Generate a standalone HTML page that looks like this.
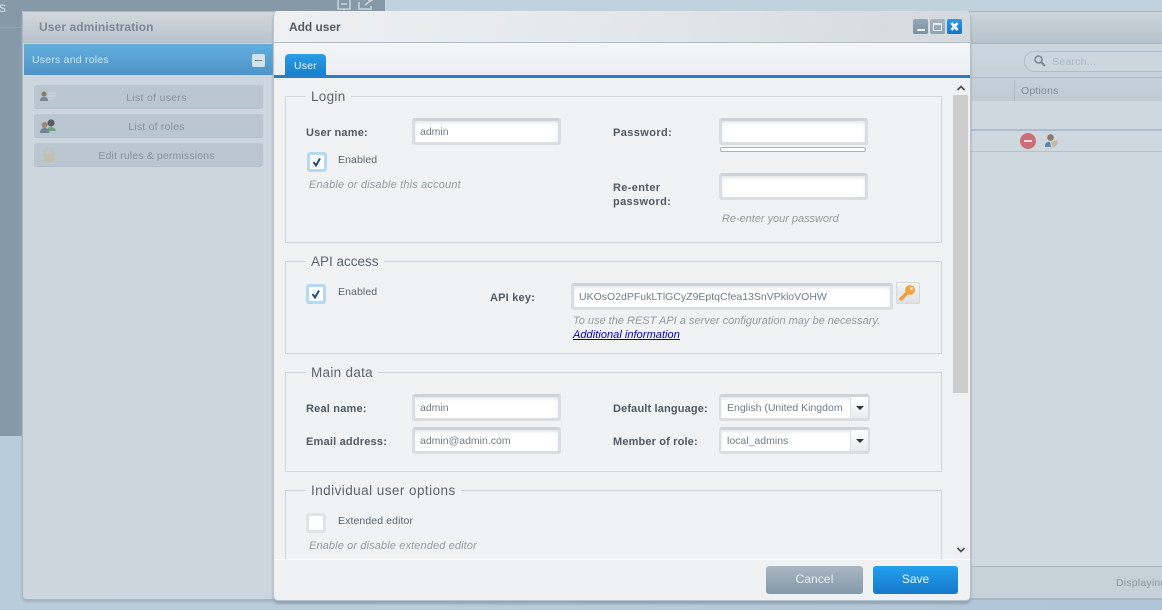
<!DOCTYPE html>
<html><head><meta charset="utf-8"><style>
html,body{margin:0;padding:0}
body{width:1162px;height:610px;overflow:hidden;position:relative;background:linear-gradient(90deg,#b8cddb 0,#b8ccd9 40%,#b0c4d9 100%);font-family:"Liberation Sans",sans-serif;font-size:11px;color:#4d5a66}
.a{position:absolute;white-space:nowrap}
.lb{position:absolute;font-weight:bold;font-size:11px;color:#4f5b66;letter-spacing:.2px;line-height:14px;white-space:nowrap}
.inp{position:absolute;box-sizing:border-box;height:27px;width:149px;background:#fff;border:3px solid #dadde1;border-top-color:#ced3d8;border-radius:3px;box-shadow:inset 0 2px 3px #e4e7ea;font-size:10.5px;color:#6f7d89;line-height:22px;padding-left:5px;white-space:nowrap;overflow:hidden}
.cb{position:absolute;box-sizing:border-box;width:20px;height:20px;background:#fff;border:3px solid #e0e3e7;border-radius:3px}
.cb.on{border-color:#b3d9f3}
.hint{position:absolute;font-style:italic;font-size:11px;color:#949ca3;white-space:nowrap}
.fs{position:absolute;box-sizing:border-box;left:285px;width:657px;border:1px solid #d2d6da}
.lg{position:absolute;left:20px;top:-8px;background:#f0f2f4;padding:0 5px;font-size:13.5px;color:#5c6570;line-height:16px;letter-spacing:.3px;white-space:nowrap}
.nav{position:absolute;left:34px;width:229px;height:24px;background:#bac6d0;border-radius:3px;text-align:center;line-height:26px;color:#85919c;font-size:10.5px;letter-spacing:.22px;box-shadow:inset 0 -1px 0 #b2bfca}
.sel{width:151px;border-width:3px 2px 3px 2px}
.sel b{position:absolute;right:0;top:0;width:17px;height:100%;background:linear-gradient(#fff,#e9ebee);border-left:1px solid #dcdfe3}
.sel b:after{content:"";position:absolute;left:5px;top:9px;border:4px solid transparent;border-top:4px solid #333;border-bottom:0}
.tx{position:absolute;font-size:10.5px;color:#5a6570;letter-spacing:.1px;white-space:nowrap}
</style></head><body>
<!-- backdrop -->
<div class="a" style="left:0;top:0;width:22px;height:436px;background:#8599a8"></div>
<div class="a" style="left:0;top:27px;width:22px;height:1px;background:#96a8b5"></div>
<div class="a" style="left:22px;top:0;width:363px;height:11px;background:#8599a8"></div>
<div class="a" style="left:385px;top:0;width:777px;height:11px;background:#bfd2dd"></div>
<div class="a" style="left:-1px;top:-1px;font-size:14px;color:#d5dee4">s</div>
<svg class="a" style="left:336px;top:0" width="42" height="11"><path d="M2 0V9H14V0M5 4H11" fill="none" stroke="#c9d3da" stroke-width="1.6"/><path d="M23 2V9H35V6M29 5L37 -1M32 0H37" fill="none" stroke="#c9d3da" stroke-width="1.6"/></svg>

<!-- left window -->
<div class="a" style="left:22px;top:11px;width:252px;height:589px;box-sizing:border-box;background:#cdd5dd;border:1px solid #a9b6c1;border-right:0;border-radius:4px 0 0 4px;box-shadow:0 2px 2px #a3b5c3"></div>
<div class="a" style="left:23px;top:12px;width:251px;height:31px;background:linear-gradient(#d2d8dd,#b9c3cc)"></div>
<div class="a" style="left:39px;top:20px;font-weight:bold;font-size:12px;color:#7b8995;letter-spacing:.1px">User administration</div>
<div class="a" style="left:24px;top:44px;width:250px;height:31px;background:linear-gradient(#63aedd,#4e94c8)"></div>
<div class="a" style="left:32px;top:54px;font-size:10.5px;color:#d3e6f2;letter-spacing:.22px">Users and roles</div>
<div class="a" style="left:252px;top:54px;width:13px;height:13px;background:#d6e2ea;border-radius:2px"></div>
<div class="a" style="left:255px;top:60px;width:7px;height:1px;border-top:1.5px solid #6f8797"></div>
<div class="nav" style="top:85px"><span style="position:relative;left:8px;letter-spacing:.3px">List of users</span></div>
<div class="nav" style="top:114px"><span style="position:relative;left:8px">List of roles</span></div>
<div class="nav" style="top:143px"><span style="position:relative;left:8px;letter-spacing:.15px">Edit rules &amp; permissions</span></div>
<svg class="a" style="left:38px;top:89px" width="20" height="16"><circle cx="6" cy="5" r="2.6" fill="#8f7f6f"/><path d="M2 12q0-4 4-4t4 4z" fill="#7a8594"/><path d="M10 4h8M10 7h8M10 10h5" stroke="#d3dbe1" stroke-width="1"/></svg>
<svg class="a" style="left:39px;top:118px" width="20" height="16"><circle cx="12" cy="5" r="3.600" fill="#5b5e5c"/><path d="M8 13q0-4 4-4t5 4z" fill="#6da27a"/><circle cx="5.500" cy="7" r="3" fill="#9b8772"/><path d="M1 15q0-5 4.500-5t5 5z" fill="#6f8194"/></svg>
<svg class="a" style="left:42px;top:147px" width="14" height="16"><path d="M3 7V4q0-3 3.500-3T10 4V7" fill="none" stroke="#c3c1b0" stroke-width="1.500"/><rect x="2" y="7" width="10" height="8" fill="#c3c1ad"/></svg>

<!-- right window -->
<div class="a" style="left:970px;top:11px;width:192px;height:588px;background:#cfd7df;box-shadow:0 1px 0 #a9b6c1"></div>
<div class="a" style="left:970px;top:11px;width:192px;height:33px;background:linear-gradient(#cdd5da,#b7c3cb);border-top:1px solid #a9b9c4;box-sizing:border-box;border-bottom:1px solid #a8b6c1"></div>
<div class="a" style="left:970px;top:44px;width:192px;height:34px;box-sizing:border-box;background:linear-gradient(#ccd6dd,#c6d1d9);border-bottom:1px solid #afbcc7"></div>
<div class="a" style="left:1024px;top:51px;width:150px;height:21px;box-sizing:border-box;border:1px solid #b0bec8;border-radius:11px;background:#cdd6dd"></div>
<svg class="a" style="left:1033px;top:54px" width="14" height="14"><circle cx="5.500" cy="5.500" r="3.500" fill="none" stroke="#7b8a96" stroke-width="1.600"/><path d="M8 8l4 4" stroke="#7b8a96" stroke-width="2"/></svg>
<div class="a" style="left:1052px;top:56px;font-size:10.5px;color:#aab6bf;letter-spacing:.25px">Search...</div>
<div class="a" style="left:970px;top:78px;width:192px;height:23px;background:linear-gradient(#c6d0d8,#c0cbd3)"></div>
<div class="a" style="left:1014px;top:80px;width:1px;height:21px;background:#aebbc5"></div>
<div class="a" style="left:1021px;top:85px;font-size:10.5px;color:#7d8b96;letter-spacing:.2px">Options</div>
<div class="a" style="left:970px;top:129px;width:192px;height:2px;background:#a9bfd3"></div>
<div class="a" style="left:970px;top:151px;width:192px;height:1px;background:#b6c2cc"></div>
<div class="a" style="left:1020px;top:133px;width:16px;height:16px;border-radius:50%;background:#cb6e78"></div>
<div class="a" style="left:1024px;top:140px;width:8px;height:2px;background:#eedadc"></div>
<svg class="a" style="left:1044px;top:133px" width="16" height="16"><circle cx="6.500" cy="4.500" r="3.300" fill="#897a6c"/><path d="M1 14q0-6 5-5l1 5z" fill="#5b86b0"/><path d="M7 9l6-2 1 4-5 4z" fill="#c5b9a3"/></svg>
<div class="a" style="left:970px;top:566px;width:192px;height:33px;box-sizing:border-box;background:#c6d1d8;border-top:1px solid #a9b6c1;border-bottom:1px solid #a9b6c1"></div>
<div class="a" style="left:1116px;top:577px;font-size:10.5px;color:#8a97a2;letter-spacing:.2px">Displaying</div>

<!-- dialog -->
<div class="a" style="left:273px;top:11px;width:698px;height:590px;box-sizing:border-box;background:#f0f2f4;border-radius:5px;border:1px solid #b5c1cb;border-top:0;box-shadow:0 3px 2px 0 #94a5b5"></div>
<div class="a" style="left:274px;top:11px;width:696px;height:32px;box-sizing:border-box;background:linear-gradient(100deg,#eef0f2 0%,#e4e7ea 50%,#d3d9de 100%);border-bottom:1px solid #b3bdc6;border-radius:5px 5px 0 0"></div>
<div class="a" style="left:289px;top:20px;font-weight:bold;font-size:12px;color:#515d68;letter-spacing:-.05px">Add user</div>
<div class="a" style="left:913px;top:19px;width:15px;height:15px;border-radius:2px;background:linear-gradient(#95a8b8,#7c91a3)"></div>
<div class="a" style="left:917px;top:29px;width:8px;height:2px;background:#f0f3f5"></div>
<div class="a" style="left:930px;top:19px;width:15px;height:15px;border-radius:2px;background:linear-gradient(#a5b5c2,#8fa3b3)"></div>
<div class="a" style="left:933px;top:23px;width:7px;height:5px;border:1px solid #e8ecef;border-top-width:2px"></div>
<div class="a" style="left:947px;top:19px;width:15px;height:15px;border-radius:2px;background:linear-gradient(#2a9be6,#1277c7)"></div>
<svg class="a" style="left:947px;top:19px" width="15" height="15"><path d="M4.500 4l6 7M10.500 4l-6 7" stroke="#fff" stroke-width="2.600"/></svg>

<div class="a" style="left:274px;top:43px;width:696px;height:32px;background:linear-gradient(#f4f5f7,#eceef1)"></div>
<div class="a" style="left:285px;top:54px;width:41px;height:21px;background:linear-gradient(#2a9ee8,#1a7fcb);border-radius:4px 4px 0 0;color:#e6f4fc;font-size:10.5px;text-align:center;line-height:24px;letter-spacing:.2px">User</div>
<div class="a" style="left:274px;top:75px;width:696px;height:3px;background:#2480c8"></div>

<!-- Login -->
<div class="fs" style="top:96px;height:147px"><div class="lg">Login</div></div>
<div class="lb" style="left:306px;top:126px">User name:</div>
<div class="inp" style="left:412px;top:118px">admin</div>
<div class="cb on" style="left:307px;top:152px"></div>
<svg class="a" style="left:310px;top:155px" width="14" height="14"><path d="M3.500 7l2.500 3.500L10 3.500" fill="none" stroke="#1d4f7e" stroke-width="2"/></svg>
<div class="tx" style="left:338px;top:154px">Enabled</div>
<div class="hint" style="left:309px;top:179px;letter-spacing:.17px">Enable or disable this account</div>
<div class="lb" style="left:613px;top:126px;letter-spacing:.4px">Password:</div>
<div class="inp" style="left:719px;top:118px"></div>
<div class="a" style="left:720px;top:147px;width:144px;height:3px;background:#fff;border:1px solid #a9b1b8;border-radius:2px"></div>
<div class="lb" style="left:613px;top:181px;letter-spacing:.35px">Re-enter<br>password:</div>
<div class="inp" style="left:719px;top:173px"></div>
<div class="hint" style="left:722px;top:213px;letter-spacing:-.03px">Re-enter your password</div>

<!-- API -->
<div class="fs" style="top:261px;height:93px"><div class="lg" style="letter-spacing:0">API access</div></div>
<div class="cb on" style="left:306px;top:284px"></div>
<svg class="a" style="left:309px;top:287px" width="14" height="14"><path d="M3.500 7l2.500 3.500L10 3.500" fill="none" stroke="#1d4f7e" stroke-width="2"/></svg>
<div class="tx" style="left:338px;top:286px">Enabled</div>
<div class="lb" style="left:490px;top:291px">API key:</div>
<div class="inp" style="left:571px;top:283px;width:322px">UKOsO2dPFukLTlGCyZ9EptqCfea13SnVPkloVOHW</div>
<div class="a" style="left:896px;top:282px;width:24px;height:22px;box-sizing:border-box;background:linear-gradient(#f2f3f5,#dfe2e5);border:1px solid #d5d8dc;border-radius:2px"></div>
<svg class="a" style="left:897px;top:283px" width="22" height="20"><circle cx="13" cy="7" r="5" fill="#f0a545"/><circle cx="14.500" cy="5.500" r="1.400" fill="#fbe9cc"/><path d="M10 10L3 17" stroke="#ec9c42" stroke-width="3.500"/></svg>
<div class="hint" style="left:573px;top:315px">To use the REST API a server configuration may be necessary.</div>
<div class="hint" style="left:573px;top:329px;color:#0000c8;text-decoration:underline;letter-spacing:.05px">Additional information</div>

<!-- Main -->
<div class="fs" style="top:372px;height:100px"><div class="lg">Main data</div></div>
<div class="lb" style="left:306px;top:402px">Real name:</div>
<div class="inp" style="left:412px;top:394px">admin</div>
<div class="lb" style="left:306px;top:435px">Email address:</div>
<div class="inp" style="left:412px;top:427px">admin@admin.com</div>
<div class="lb" style="left:613px;top:402px;letter-spacing:.15px">Default language:</div>
<div class="inp sel" style="left:719px;top:394px;padding-left:6px">English (United Kingdom<b></b></div>
<div class="lb" style="left:613px;top:435px;letter-spacing:.15px">Member of role:</div>
<div class="inp sel" style="left:719px;top:427px;padding-left:6px">local_admins<b></b></div>

<!-- Individual -->
<div class="fs" style="top:490px;height:90px"><div class="lg" style="letter-spacing:.45px">Individual user options</div></div>
<div class="cb" style="left:306px;top:513px"></div>
<div class="tx" style="left:338px;top:515px">Extended editor</div>
<div class="hint" style="left:309px;top:540px;letter-spacing:.12px">Enable or disable extended editor</div>

<!-- scrollbar -->
<div class="a" style="left:953px;top:78px;width:16px;height:481px;background:#f0f1f2"></div>
<div class="a" style="left:953px;top:95px;width:15px;height:298px;background:#cdcdcd"></div>
<svg class="a" style="left:955px;top:84px" width="12" height="8"><path d="M2.500 6l3.500-3.500 3.500 3.500" fill="none" stroke="#505050" stroke-width="1.700"/></svg>
<svg class="a" style="left:955px;top:546px" width="12" height="8"><path d="M2.500 2l3.500 3.500 3.500-3.500" fill="none" stroke="#505050" stroke-width="1.700"/></svg>

<!-- footer -->
<div class="a" style="left:274px;top:559px;width:696px;height:41px;box-sizing:border-box;background:#f0f1f3;border-top:1px solid #fcfcfd;border-radius:0 0 5px 5px"></div>
<div class="a" style="left:766px;top:566px;width:97px;height:28px;background:linear-gradient(#a9b8c4,#8499ab);border-radius:3px;color:#e9eef2;font-size:12px;text-align:center;line-height:27px;letter-spacing:.1px">Cancel</div>
<div class="a" style="left:873px;top:566px;width:85px;height:28px;background:linear-gradient(#24a0ee,#1579ca);border-radius:3px;color:#eaf6fd;font-size:12px;text-align:center;line-height:27px">Save</div>
</body></html>
